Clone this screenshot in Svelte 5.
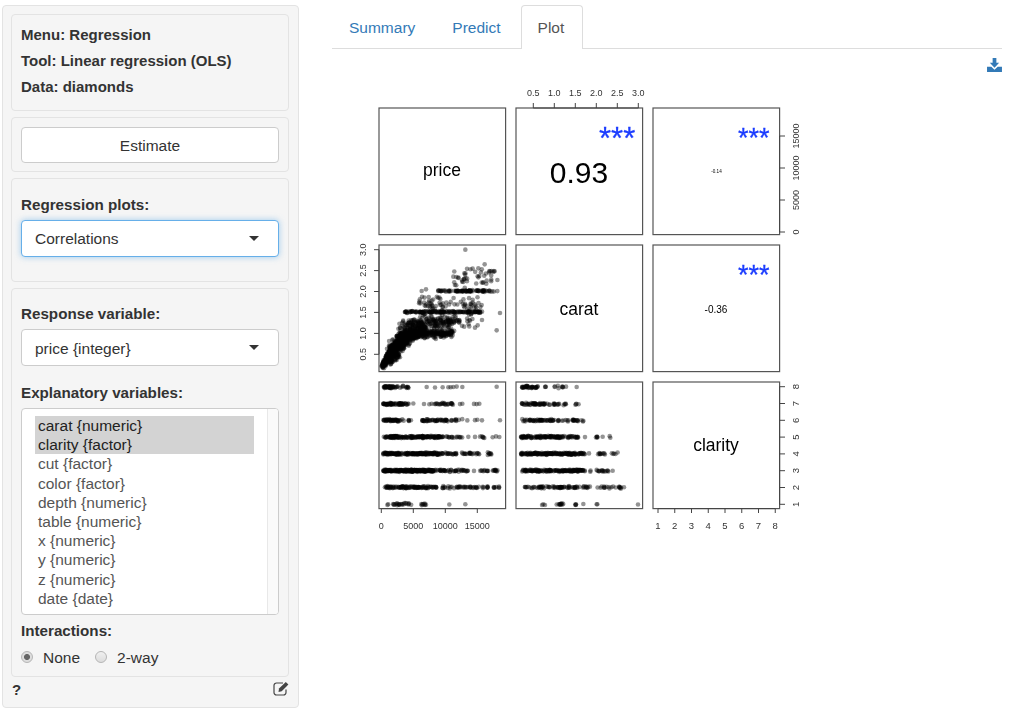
<script>
  const variables = [
    { label: "carat {numeric}", selected: true },
    { label: "clarity {factor}", selected: true },
    { label: "cut {factor}" },
    { label: "color {factor}" },
    { label: "depth {numeric}" },
    { label: "table {numeric}" },
    { label: "x {numeric}" },
    { label: "y {numeric}" },
    { label: "z {numeric}" },
    { label: "date {date}" },
  ];

  const panelX = [379, 516, 653];
  const panelY = [107, 244, 381];
  const panelSize = 126.6;

  // seeded, so the scatter looks the same on every load
  let seed = 20240611;
  function rnd() {
    seed = (seed + 0x6d2b79f5) | 0;
    let t = Math.imul(seed ^ (seed >>> 15), 1 | seed);
    t = (t + Math.imul(t ^ (t >>> 7), 61 | t)) ^ t;
    return ((t ^ (t >>> 14)) >>> 0) / 4294967296;
  }
  const gauss = () => (rnd() + rnd() + rnd() - 1.5) / 1.5;

  // blobs along a line: x1, y1, x2, y2, spread, count
  const caratBlobs = [
    [98, 392, 130, 330, 12, 220],
    [115, 370, 175, 300, 30, 320],
    [125, 330, 230, 275, 32, 260],
    [140, 298, 310, 291, 18, 260],
    [150, 272, 310, 258, 30, 170],
    [165, 228, 400, 228, 4, 150],
    [200, 204, 395, 204, 30, 70],
    [180, 252, 370, 252, 25, 70],
    [260, 165, 445, 165, 4, 90],
    [310, 130, 445, 125, 48, 45],
  ];
  const caratSingles = [
    [346, 41], [404, 85], [368, 98], [385, 97], [343, 112], [310, 122], [215, 165], [228, 160],
    [375, 275], [383, 268], [440, 283], [450, 231], [396, 252], [418, 105], [430, 108],
  ];

  const caratPoints = [];
  for (const [x1, y1, x2, y2, s, n] of caratBlobs) {
    for (let i = 0; i < n; i++) {
      const t = rnd();
      const x = 350 + (x1 + (x2 - x1) * t + gauss() * s * 0.6) / 3;
      caratPoints.push([Math.min(x, 501), 235 + (y1 + (y2 - y1) * t + gauss() * s) / 3]);
    }
  }
  for (const [x, y] of caratSingles) caratPoints.push([350 + x / 3, 235 + y / 3]);

  // clarity rows from 8 down to 1; a segment is [from, to, count], a lone number is one dot
  const rowY = [386, 403, 419.3, 436, 452.7, 469.7, 486.3, 503.3];
  const priceRows = [
    [[70, 105, 40], [105, 130, 8], [138, 148, 7], 200, 225, 248, 265, 272, 280, 290, 307, 410],
    [[70, 130, 60], [130, 150, 7], 160, 192, 208, 215, [222, 280, 24], 300, 307, 342, 350, 358],
    [[70, 115, 40], [115, 165, 10], [185, 265, 45], [270, 310, 10], 322, 345, 352, 366, 420],
    [[70, 250, 170], [255, 310, 16], 325, 345, 360, [365, 375, 5], 398, 408, 418],
    [[70, 250, 180], [255, 360, 38], [372, 395, 8]],
    [[70, 220, 220], [220, 325, 45], 342, [358, 385, 10], [398, 415, 10]],
    [[70, 200, 90], [200, 385, 65], [400, 425, 8]],
    [[82, 155, 24], [178, 200, 8], 268, 316],
  ];
  const caratRows = [
    [[35, 85, 35], [95, 108, 3], [132, 170, 9], 200],
    [[33, 105, 45], [112, 125, 3], [128, 175, 15], [192, 208, 4]],
    [[33, 100, 35], [105, 205, 40], [210, 222, 3]],
    [[33, 205, 130], 225, [255, 270, 5], 278, [295, 305, 2]],
    [[33, 225, 170], 237, [255, 285, 10], [290, 325, 5]],
    [[35, 225, 160], [240, 250, 2], [258, 300, 15], 308],
    [[42, 240, 80], [258, 335, 20], 342],
    [[95, 110, 3], [125, 160, 11], [190, 200, 4], 220, 260, 262, 384],
  ];

  function rowPoints(rows, left) {
    const out = [];
    rows.forEach((row, r) => {
      for (const seg of row) {
        if (typeof seg === "number") {
          out.push([left + seg / 3, rowY[r] + gauss() * 0.8]);
        } else {
          for (let i = 0; i < seg[2]; i++) {
            out.push([left + (seg[0] + (seg[1] - seg[0]) * rnd()) / 3, rowY[r] + gauss() * 1.5]);
          }
        }
      }
    });
    return out;
  }

  const points = [...caratPoints, ...rowPoints(priceRows, 360), ...rowPoints(caratRows, 510)];

  const topTicks = [["0.5", 533.3], ["1.0", 554.3], ["1.5", 575.3], ["2.0", 596.3], ["2.5", 617.3], ["3.0", 638.3]];
  const priceTicks = [["0", 231], ["5000", 199], ["10000", 167], ["15000", 135]];
  const caratTicks = [["0.5", 353.3], ["1.0", 332.4], ["1.5", 311.4], ["2.0", 290.5], ["2.5", 269.6], ["3.0", 248.7]];
  const bottomTicks = [["0", 381.3], ["5000", 413.3], ["10000", 445.3], ["15000", 477.3]];
  const levels = [1, 2, 3, 4, 5, 6, 7, 8];
</script>

<div class="page">
  <aside class="sidebar">
    <section class="well info">
      <div>Menu: Regression</div>
      <div>Tool: Linear regression (OLS)</div>
      <div>Data: diamonds</div>
    </section>

    <section class="well action">
      <button class="estimate">Estimate</button>
    </section>

    <section class="well plots">
      <div class="label">Regression plots:</div>
      <div class="select focused">Correlations<span class="caret"></span></div>
    </section>

    <section class="well vars">
      <div class="label">Response variable:</div>
      <div class="select">price {"{integer}"}<span class="caret"></span></div>

      <div class="label explan">Explanatory variables:</div>
      <div class="listbox">
        <ul>
          {#each variables as v (v.label)}
            <li class:selected={v.selected}>{v.label}</li>
          {/each}
        </ul>
        <div class="scrolltrack"></div>
      </div>

      <div class="label inter">Interactions:</div>
      <div class="radios">
        <span class="radio on"></span><span class="radio-text">None</span>
        <span class="radio"></span><span class="radio-text">2-way</span>
      </div>
    </section>

    <footer class="side-foot">
      <span class="help">?</span>
      <svg class="edit" width="17" height="15" viewBox="0 0 17 15" aria-hidden="true">
        <path d="M13 8.5v3a2.5 2.5 0 0 1-2.5 2.5H3.5A2.5 2.5 0 0 1 1 11.5v-7A2.5 2.5 0 0 1 3.5 2H10" fill="none" stroke="#444" stroke-width="1.2" />
        <path d="M6 7.5 12.8 .9l2.6 2.6-6.7 6.8-3.2.7z" fill="#444" />
      </svg>
    </footer>
  </aside>

  <main class="main">
    <nav class="tabs">
      <span class="tab">Summary</span>
      <span class="tab">Predict</span>
      <span class="tab active">Plot</span>
    </nav>

    <div class="toolbar">
      <svg width="15" height="14" viewBox="0 0 16 15" aria-hidden="true">
        <path d="M6 0h4v5h3L8 10.4 3 5h3z" fill="#337ab7" />
        <path d="M0 9.5h4.6L8 12.6l3.4-3.1H16V15H0z" fill="#337ab7" />
      </svg>
    </div>

    <svg class="plot" width="460" height="460" viewBox="350 85 460 460">
      {#each panelY as y}
        {#each panelX as x}
          <rect {x} {y} width={panelSize} height={panelSize} fill="none" stroke="#555" stroke-width="1.2" />
        {/each}
      {/each}

      {#each points as p}
        <circle cx={p[0]} cy={p[1]} r="2.3" fill="#000" fill-opacity="0.42" />
      {/each}

      <text class="var" x="442" y="175">price</text>
      <text class="var" x="579" y="313.5">carat</text>
      <text class="var" x="716" y="449.5">clarity</text>

      <text class="corr" x="579" y="181.5" font-size="30">0.93</text>
      <text class="corr" x="716.5" y="172" font-size="4.6" fill="#444">-0.14</text>
      <text class="corr" x="716" y="312" font-size="10">-0.36</text>

      <text class="stars" x="599" y="148" font-size="31">***</text>
      <text class="stars" x="738" y="146" font-size="27">***</text>
      <text class="stars" x="738" y="282.5" font-size="27">***</text>

      <!-- top axis, carat -->
      <path class="axis" d="M533.3 107H638.3" />
      {#each topTicks as [label, x]}
        <path class="axis" d="M{x} 107V102" />
        <text class="tick" {x} y="95">{label}</text>
      {/each}

      <!-- right axis, price -->
      <path class="axis" d="M779.6 231V135" />
      {#each priceTicks as [label, y]}
        <path class="axis" d="M779.6 {y}H785" />
        <text class="tick" transform="translate(799 {y}) rotate(-90)">{label}</text>
      {/each}

      <!-- left axis, carat -->
      <path class="axis" d="M379 353.3V248.7" />
      {#each caratTicks as [label, y]}
        <path class="axis" d="M379 {y}H374" />
        <text class="tick" transform="translate(366 {y}) rotate(-90)">{label}</text>
      {/each}

      <!-- bottom axes -->
      <path class="axis" d="M381.3 507.6H477.3" />
      {#each bottomTicks as [label, x]}
        <path class="axis" d="M{x} 507.6V512" />
        <text class="tick" {x} y="528">{label}</text>
      {/each}
      <path class="axis" d="M658 507.6H775" />
      {#each levels as n, i}
        <path class="axis" d="M{658 + i * 16.75} 507.6V512" />
        <text class="tick level" x={658 + i * 16.75} y="528">{n}</text>
      {/each}

      <!-- right axis, clarity -->
      <path class="axis" d="M779.6 503.3V385.7" />
      {#each levels as n, i}
        <path class="axis" d="M779.6 {503.3 - i * 16.8}H785" />
        <text class="tick level" transform="translate(799 {503.3 - i * 16.8}) rotate(-90)">{n}</text>
      {/each}
    </svg>
  </main>
</div>

<style>
  :global(body) {
    background: #fff;
    font-family: "Liberation Sans", Arial, sans-serif;
    color: #333;
  }

  .page {
    display: flex;
    gap: 33px;
    padding: 5px 8px 4px 2px;
    width: 1000px;
  }

  /* ── Sidebar ── */
  .sidebar {
    width: 297px;
    box-sizing: border-box;
    flex: none;
    height: 703px;
    padding: 8px 9px 0 8px;
    background: #f5f5f5;
    border: 1px solid #e3e3e3;
    border-radius: 4px;
    display: flex;
    flex-direction: column;
    gap: 6px;
  }

  .well {
    background: #f5f5f5;
    border: 1px solid #e3e3e3;
    border-radius: 4px;
    box-sizing: border-box;
    padding: 0 9px;
  }

  .info {
    padding: 7px 9px 10px;
    font-size: 15px;
    font-weight: 700;
    line-height: 26px;
  }

  .action {
    padding: 9px 9px 8px;
  }

  .estimate {
    display: block;
    width: 100%;
    height: 36px;
    padding: 2px 0 0;
    font: inherit;
    font-size: 15.5px;
    color: #333;
    background: #fff;
    border: 1px solid #ccc;
    border-radius: 4px;
  }

  .plots {
    padding: 16px 9px 24px;
  }

  .vars {
    padding: 15px 9px 9px;
    height: 389px;
  }
  .vars .select {
    line-height: 37px;
  }

  .label {
    font-size: 15.2px;
    font-weight: 700;
    line-height: 20px;
    margin-bottom: 5px;
  }
  .explan { margin-top: 17px; }
  .inter { margin-top: 6px; margin-bottom: 6px; }

  .select {
    position: relative;
    box-sizing: border-box;
    height: 37px;
    padding: 0 13px;
    font-size: 15.5px;
    line-height: 36px;
    background: #fff;
    border: 1px solid #ccc;
    border-radius: 4px;
  }
  .select.focused {
    border-color: #66afe9;
    box-shadow: 0 0 6px rgba(102, 175, 233, 0.6);
  }

  .caret {
    position: absolute;
    right: 19px;
    top: 15px;
    border-top: 5px solid #333;
    border-left: 5px solid transparent;
    border-right: 5px solid transparent;
  }

  .listbox {
    height: 207px;
    box-sizing: border-box;
    display: flex;
    background: #fff;
    border: 1px solid #ccc;
    border-radius: 4px;
    overflow: hidden;
  }
  .listbox ul {
    list-style: none;
    flex: 1;
    margin: 0;
    padding: 7px 13px 0 13px;
  }
  .listbox li {
    height: 19.2px;
    line-height: 19px;
    padding-left: 3px;
    font-size: 15.5px;
    color: #555;
  }
  .listbox li.selected {
    background: #d3d3d3;
    color: #222;
  }
  .scrolltrack {
    width: 10px;
    flex: none;
    border-left: 1px solid #e8e8e8;
    background: #fafafa;
  }

  .radios {
    display: flex;
    align-items: center;
    height: 20px;
    font-size: 15.5px;
  }
  .radio {
    width: 12px;
    height: 12px;
    box-sizing: border-box;
    border-radius: 50%;
    border: 1px solid #b5b5b5;
    background: linear-gradient(#f0f0f0, #dcdcdc);
    flex: none;
  }
  .radio.on {
    background: radial-gradient(circle, #666 0 2.6px, #ddd 3.4px);
  }
  .radio-text { margin: 0 15px 0 10px; padding-top: 2px; }

  .side-foot {
    display: flex;
    justify-content: space-between;
    align-items: center;
    height: 23px;
    margin-top: -6px;
    padding: 0 0 0 1px;
    margin-right: -1px;
  }
  .help {
    font-size: 15px;
    font-weight: 700;
    color: #333;
    padding-top: 2px;
  }

  /* ── Main ── */
  .main {
    width: 670px;
    flex: none;
  }

  .tabs {
    display: flex;
    height: 43px;
    box-sizing: content-box;
    border-bottom: 1px solid #ddd;
  }
  .tab {
    padding: 0 17px 0 16px;
    margin-right: 2px;
    font-size: 15.5px;
    line-height: 44px;
    color: #337ab7;
    border: 1px solid transparent;
    border-bottom: 0;
    border-radius: 4px 4px 0 0;
    height: 43px;
    box-sizing: border-box;
  }
  .tab.active {
    height: 44px;
    padding-right: 18px;
    color: #555;
    background: #fff;
    border-color: #ddd;
  }

  .toolbar {
    display: flex;
    justify-content: flex-end;
    padding-top: 9px;
    height: 28px;
    box-sizing: border-box;
    margin-bottom: 9px;
  }

  .plot {
    display: block;
    margin-left: 18px;
    filter: blur(0.35px);
  }

  .plot text {
    font-family: "Liberation Sans", Arial, sans-serif;
  }
  .var {
    font-size: 17.5px;
    text-anchor: middle;
    fill: #000;
  }
  .corr {
    text-anchor: middle;
    fill: #000;
  }
  .stars {
    fill: #1c3dff;
    stroke: #1c3dff;
    stroke-width: 0.3;
  }
  .axis {
    fill: none;
    stroke: #444;
    stroke-width: 1;
  }
  .tick {
    font-size: 9px;
    text-anchor: middle;
    fill: #333;
  }
  .level {
    font-size: 9.5px;
  }
</style>
